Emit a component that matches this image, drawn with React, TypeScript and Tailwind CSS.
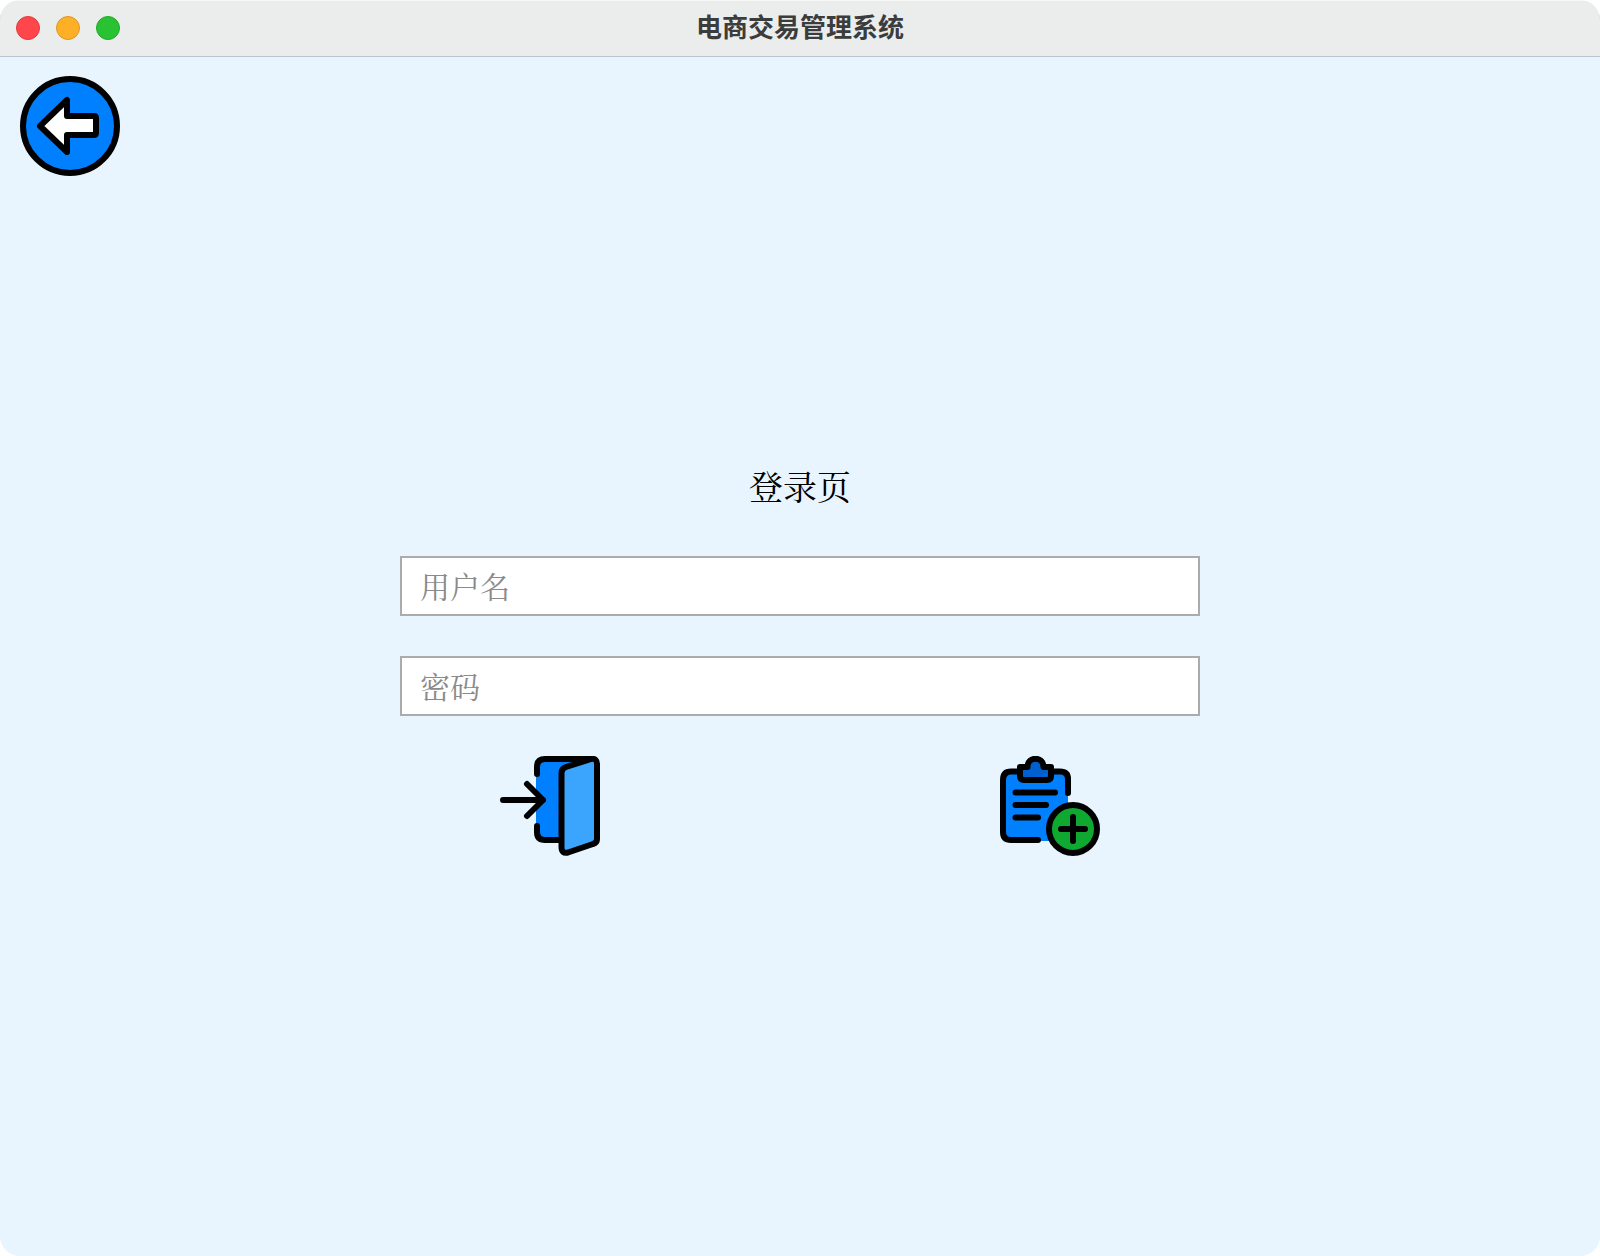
import { useState } from "react";

const sans = "font-['Noto_Sans_CJK_SC',sans-serif]";
const serif = "font-['Noto_Serif_CJK_SC','Source_Han_Serif_SC','Noto_Sans_CJK_SC',serif]";

function BackIcon() {
  return (
    <svg viewBox="0 0 100 100" className="size-full" fill="none" stroke="#000" strokeWidth="6" strokeLinejoin="round" aria-hidden="true">
      <circle cx="50" cy="50" r="47" fill="#0080ff" />
      <path d="M20 50 47 24V40H74Q76 40 76 42V57Q76 59 74 59H47V76Z" fill="#fff" />
    </svg>
  );
}

function LoginIcon() {
  return (
    <svg viewBox="0 0 100 100" className="size-full" fill="none" stroke="#000" strokeWidth="6" strokeLinecap="round" strokeLinejoin="round" aria-hidden="true">
      <path d="M36 10Q37 3 44 3H90L61 20V85H44Q36 84 36 77Z" fill="#0080ff" stroke="none" />
      <path d="M37 18V11Q37 3 45 3H92" />
      <path d="M37 70V76Q37 84 45 84H61" />
      <path d="M66 11 91 3Q97 2 97 8V83Q97 87 93 88L68 96.500Q61.500 98 61.500 91V17Q61.500 12.500 66 11Z" fill="#3ba5fd" />
      <path d="M3 44H43M27 28 43 44 27 60" />
    </svg>
  );
}

function RegisterIcon() {
  return (
    <svg viewBox="0 0 100 100" className="size-full" fill="none" stroke="#000" strokeWidth="6" strokeLinecap="round" strokeLinejoin="round" aria-hidden="true">
      <path d="M3 24Q3 15 11 15H60Q68 15 68 23V85H11Q3 85 3 77Z" fill="#0080ff" stroke="none" />
      <path d="M20 15.500H11Q3 15.500 3 24V76Q3 84 11 84H38" />
      <path d="M51 15.500H60Q68 15.500 68 23V37" />
      <path d="M20 11H27.500C27.500 0 43.500 0 43.500 11H51V20Q51 24 47 24H24Q20 24 20 20Z" fill="#0060d0" />
      <path d="M15.500 36.500H55M15.500 49H46M15.500 61.500H38" />
      <circle cx="73" cy="73" r="24" fill="#0fa830" />
      <path d="M61 73H85M73 61V85" />
    </svg>
  );
}

function TitleBar() {
  return (
    <header className="relative z-10 grid h-14 grid-cols-[1fr_auto_1fr] items-center bg-[#ebeded] px-4 shadow-[0_1px_0_#b9c6cf,inset_0_1px_0_#f7f8f8]">
      <div className="flex gap-4">
        <button type="button" aria-label="关闭" className="size-6 rounded-full border border-[#e0393c] bg-[#ff464a]" />
        <button type="button" aria-label="最小化" className="size-6 rounded-full border border-[#dc9729] bg-[#fdaf25]" />
        <button type="button" aria-label="最大化" className="size-6 rounded-full border border-[#22a82b] bg-[#29c232]" />
      </div>
      <h1 className={`${sans} pb-1 text-[26px] leading-8 font-bold text-[#3b3c3c]`}>电商交易管理系统</h1>
    </header>
  );
}

const inputClass =
  "h-[60px] w-full border-2 border-[#ababab] bg-white px-[18px] pb-0.5 text-[30px] font-normal text-black outline-none placeholder:text-[#8a8a8a] placeholder:opacity-100";

export default function App() {
  const [user, setUser] = useState("");
  const [password, setPassword] = useState("");

  return (
    <div className="min-h-screen bg-white">
      <div className="flex min-h-screen flex-col overflow-hidden rounded-[20px] bg-[#e8f5ff]">
        <TitleBar />
        <main className={`${serif} grid flex-1`}>
          <button type="button" aria-label="返回" className="col-start-1 row-start-1 m-5 size-[100px] self-start justify-self-start">
            <BackIcon />
          </button>
          <form onSubmit={(e) => e.preventDefault()} className="col-start-1 row-start-1 flex w-1/2 flex-col gap-10 place-self-center">
            <h2 className="text-center text-[34px] leading-[60px] text-black">登录页</h2>
            <input type="text" aria-label="用户名" placeholder="用户名" value={user} onChange={(e) => setUser(e.target.value)} className={inputClass} />
            <input type="password" aria-label="密码" placeholder="密码" value={password} onChange={(e) => setPassword(e.target.value)} className={inputClass} />
            <div className="flex justify-between px-[12.5%]">
              <button type="submit" aria-label="登录" className="size-[100px]">
                <LoginIcon />
              </button>
              <button type="button" aria-label="注册" className="size-[100px]">
                <RegisterIcon />
              </button>
            </div>
          </form>
        </main>
      </div>
    </div>
  );
}
